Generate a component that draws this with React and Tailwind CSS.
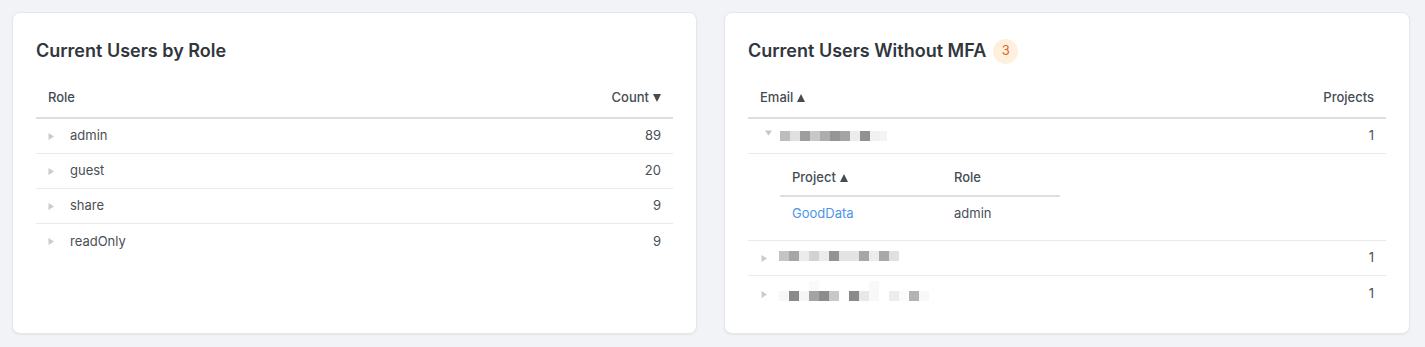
const roles = [
  { name: "admin", count: 89 },
  { name: "guest", count: 20 },
  { name: "share", count: 9 },
  { name: "readOnly", count: 9 },
];

// pixelated (blurred) email addresses
const emailRow1 = [
  "bg-[#bdbdbd]", "bg-[#e0e0e0]", "bg-[#9e9e9e]", "bg-[#c8c8c8]", "bg-[#adadad]",
  "bg-[#959595]", "bg-[#a3a3a3]", "bg-[#ececec]", "bg-[#919191]", "bg-[#f0f0f0]",
];
const emailRow2 = [
  "bg-[#c4c4c4]", "bg-[#a6a6a6]", "bg-[#ececec]", "bg-[#d2d2d2]", "bg-[#ececec]",
  "bg-[#939393]", "bg-[#e3e3e3]", "bg-[#e3e3e3]", "bg-[#a6a6a6]", "bg-[#ececec]",
  "bg-[#a8a8a8]", "bg-[#e0e0e0]",
];
const emailRow3Top = [
  "bg-white", "bg-white", "bg-white", "bg-[#fafafa]", "bg-white", "bg-white",
  "bg-white", "bg-white", "bg-white", "bg-[#f9f9f9]", "bg-white", "bg-white",
  "bg-white", "bg-white", "bg-white",
];
const emailRow3 = [
  "bg-[#f7f7f7]", "bg-[#8a8a8a]", "bg-[#f5f5f5]", "bg-[#a3a3a3]", "bg-[#8c8c8c]",
  "bg-[#c8c8c8]", "bg-white", "bg-[#8a8a8a]", "bg-[#e8e8e8]", "bg-[#f8f8f8]",
  "bg-white", "bg-[#ececec]", "bg-[#fbfbfb]", "bg-[#b3b3b3]", "bg-[#f8f8f8]",
];

function Caret({ open = false }) {
  return (
    <svg width="7" height="7" viewBox="0 0 7 7" className="shrink-0">
      {open ? (
        <polygon points="0,0.5 7,0.5 3.5,5.5" fill="#c3c6cc" />
      ) : (
        <polygon points="0.5,0 6,3.5 0.5,7" fill="#c8cbd0" />
      )}
    </svg>
  );
}

function SortArrow({ up = false }) {
  return (
    <svg width="8" height="8" viewBox="0 0 8 8" className="shrink-0">
      {up ? (
        <polygon points="4,0 8,8 0,8" fill="#464c54" />
      ) : (
        <polygon points="0,0 8,0 4,8" fill="#464c54" />
      )}
    </svg>
  );
}

function Pixels({ cells, extra = "" }) {
  return (
    <div className={"flex " + extra}>
      {cells.map((c, i) => (
        <div key={i} className={"w-[10px] h-[10px] " + c} />
      ))}
    </div>
  );
}

function Card({ children }) {
  return (
    <div className="bg-white rounded-[8px] border border-[#e6e7eb] shadow-[0_1px_2px_rgba(0,0,0,0.06)] px-[23px] pt-[24px] pb-[12px] h-[322px]">
      {children}
    </div>
  );
}

export default function App() {
  return (
    <div
      className="min-h-[347px] bg-[#f2f3f7] pl-[12px] pt-[12px] text-[#464c54]"
      style={{ fontFamily: "Inter, 'Noto Sans', sans-serif" }}
    >
      <div className="grid grid-cols-[685px_686px] gap-[27px]">
        <Card>
          <h2 className="text-[18px] leading-[28px] font-semibold text-[#31363d]">
            Current Users by Role
          </h2>
          <div className="mt-[14px] text-[13px]">
            <div className="flex items-center h-[40px] px-[12px] border-b-2 border-[#dddee3] font-medium">
              <div className="flex-1">Role</div>
              <div className="flex items-center gap-[4px]">
                Count <SortArrow />
              </div>
            </div>
            {roles.map((r, i) => (
              <div
                key={r.name}
                className={
                  "flex items-center h-[35px] px-[12px] " +
                  (i < roles.length - 1 ? "border-b border-[#e8e9ec]" : "")
                }
              >
                <Caret />
                <div className="flex-1 ml-[15px] text-[#4a4f56]">{r.name}</div>
                <div className="text-[#4a4f56]">{r.count}</div>
              </div>
            ))}
          </div>
        </Card>

        <Card>
          <div className="flex items-center">
            <h2 className="text-[18px] leading-[28px] font-semibold text-[#31363d]">
              Current Users Without MFA
            </h2>
            <span className="ml-[7px] w-[25px] h-[25px] rounded-full bg-[#fdf0dc] text-[#e6622a] text-[13px] flex items-center justify-center">
              3
            </span>
          </div>
          <div className="mt-[14px] text-[13px]">
            <div className="flex items-center h-[40px] px-[12px] border-b-2 border-[#dddee3] font-medium">
              <div className="flex-1 flex items-center gap-[4px]">
                Email <SortArrow up />
              </div>
              <div>Projects</div>
            </div>

            <div className="flex items-center h-[35px] pl-[17px] pr-[12px] border-b border-[#e8e9ec]">
              <div className="-mt-[6px]">
                <Caret open />
              </div>
              <Pixels cells={emailRow1} extra="ml-[8px]" />
              <div className="w-[7px] h-[10px] bg-[#f4f4f4]" />
              <div className="flex-1" />
              <div className="text-[#4a4f56]">1</div>
            </div>

            <div className="pl-[32px] pt-[7px] pb-[10px] border-b border-[#e8e9ec]">
              <div className="w-[280px]">
                <div className="flex items-center h-[36px] border-b-2 border-[#dddee3] font-medium">
                  <div className="w-[162px] pl-[12px] flex items-center gap-[4px]">
                    Project <SortArrow up />
                  </div>
                  <div className="pl-[12px]">Role</div>
                </div>
                <div className="flex items-center h-[33px]">
                  <div className="w-[162px] pl-[12px] text-[#4c96ea]">GoodData</div>
                  <div className="pl-[12px] text-[#4a4f56]">admin</div>
                </div>
              </div>
            </div>

            <div className="flex items-center h-[35px] pl-[13px] pr-[12px] border-b border-[#e8e9ec]">
              <Caret />
              <Pixels cells={emailRow2} extra="ml-[11px] -mt-[5px]" />
              <div className="flex-1" />
              <div className="text-[#4a4f56]">1</div>
            </div>

            <div className="flex items-center h-[36px] pl-[13px] pr-[12px]">
              <Caret />
              <div className="ml-[11px] -mt-[6px]">
                <Pixels cells={emailRow3Top} />
                <Pixels cells={emailRow3} />
              </div>
              <div className="flex-1" />
              <div className="text-[#4a4f56]">1</div>
            </div>
          </div>
        </Card>
      </div>
    </div>
  );
}
